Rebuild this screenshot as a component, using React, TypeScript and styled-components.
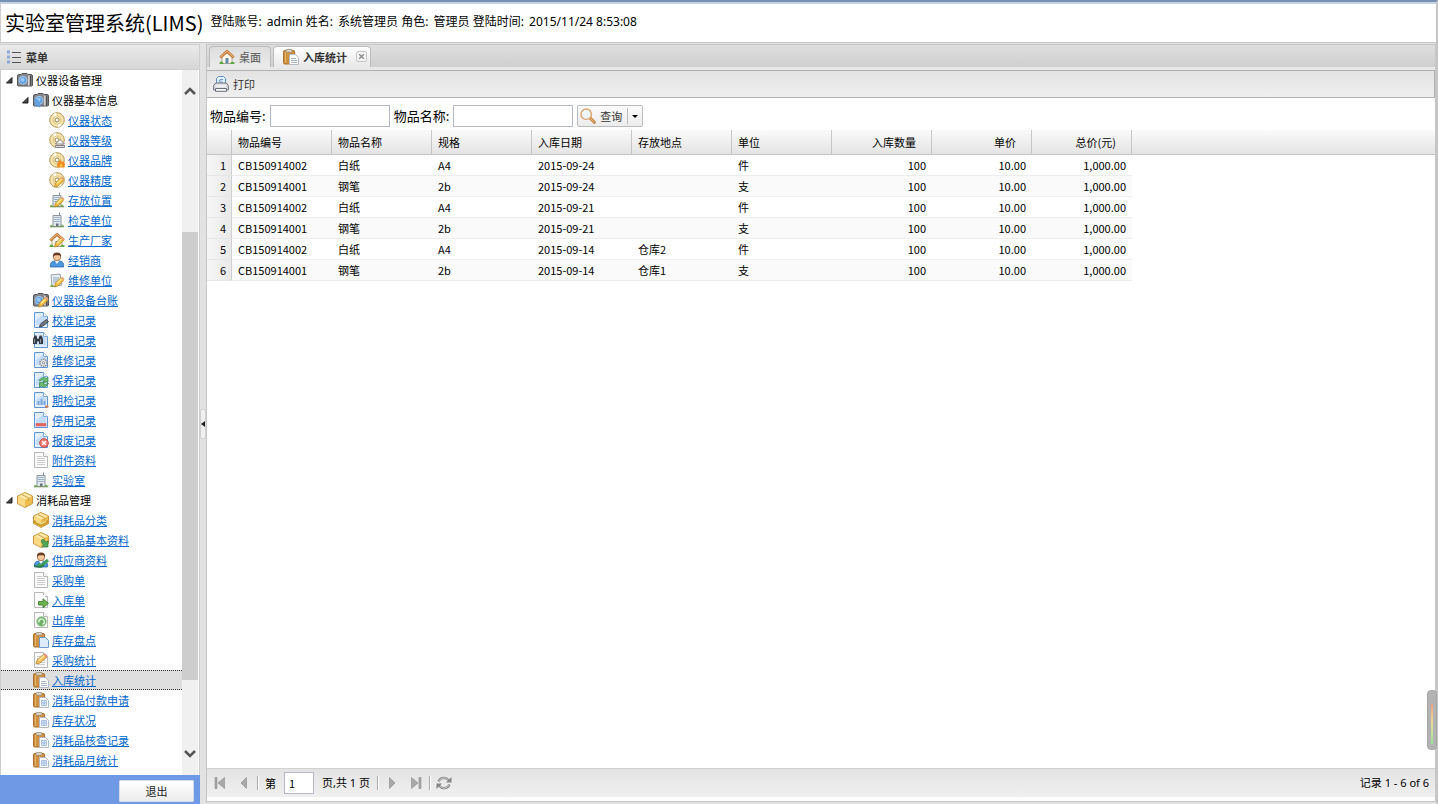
import React from "react";
import styled, { createGlobalStyle } from "styled-components";

const GlobalStyle = createGlobalStyle`
  * { box-sizing: border-box; }
  body { margin: 0; background: #fff; }
  body, button, input {
    font-family: "Noto Sans CJK SC", "Liberation Sans", sans-serif;
    font-size: 11px;
    line-height: 16px;
    color: #000;
  }
  button { padding: 0; border: 0; background: none; }
`;

/* ---------- icons ---------- */

type IconName =
  | "camera" | "cameraFolder" | "cameraEdit" | "disc" | "building" | "house"
  | "user" | "userEdit" | "note" | "record" | "page" | "box" | "boxOpen"
  | "clipboard" | "clipboardBlue" | "pageEdit";
type Overlay =
  | "eject" | "flame" | "pencil" | "pen" | "binoculars" | "gear" | "sync"
  | "chart" | "minus" | "cross" | "arrow" | "refresh" | "sheet" | "grid" | "boxArrow";

const Pencil = () => (
  <g>
    <path d="M5.500 15l1-4 5-5 3 2.800-5.200 5z" fill="#f3bd3c" stroke="#b5802a" strokeWidth=".7" />
    <path d="M7.500 11l4.500-4.500 1 1-4.500 4.500z" fill="#ffe79a" />
    <path d="M11.800 5.800l1.300-1.300 2.600 2.500-1.300 1.600z" fill="#eda572" />
  </g>
);
const Building = () => (
  <g>
    <path d="M4 14.500V3.500h8v11z" fill="#e3e8ed" stroke="#8b959f" />
    <path d="M5.500 5.500h5M5.500 7.500h5M5.500 9.500h5" stroke="#6f93b6" strokeDasharray="1.200 .7" />
    <path d="M10.500 3.500V.5" stroke="#8b959f" />
    <path d="M7 11.500h2.500v3H7z" fill="#68727d" />
    <path d="M1 15c0-3 2.500-3 3.500 0zM11.500 15c.3-3.500 3-3.500 3.500 0z" fill="#7ab55e" />
    <path d="M1 14.800h14" stroke="#759660" />
  </g>
);
const Page = ({ blue = false }: { blue?: boolean }) => (
  <g>
    <path d="M1.500.5h9l4 4v11h-13z" fill={blue ? "#e2eefd" : "#fbfbfb"} stroke={blue ? "#5f95d6" : "#b9b9b9"} />
    {!blue && <path d="M4 4.500h5M4 6.500h8M4 8.500h8M4 10.500h8M4 12.500h8" stroke="#cdcdcd" />}
    {blue && <path d="M3 13V8l7-5.500 3 3V13z" fill="#c2dbfa" />}
    <path d="M10.500.5v4h4" fill="#fff" stroke={blue ? "#7fabe0" : "#b9b9b9"} />
  </g>
);
const Camera = () => (
  <g>
    <path d="M.5 4q0-1.500 1.500-1.500h2l1-1h5l1 1h3q1.500 0 1.500 1.500v9q0 1-1 1h-13q-1 0-1-1z" fill="#85868a" stroke="#55565a" />
    <path d="M11 3.500h2v10h-2z" fill="#d0cfcb" />
    <path d="M13.500 3.500v10" stroke="#4c4d51" strokeWidth="1.400" />
    <circle cx="6" cy="8.300" r="4" fill="#5f9fe0" stroke="#b6d0ec" strokeWidth=".8" />
    <circle cx="5.600" cy="7.800" r="2" fill="#9ccaf6" />
  </g>
);
const Person = () => (
  <g>
    <path d="M1.500 15q-1-5.500 4-6h5q5 .5 4 6z" fill="#4c96df" stroke="#2c69ac" strokeWidth=".8" />
    <path d="M6 9l2 3 2-3z" fill="#fff" />
    <circle cx="8" cy="5" r="3.700" fill="#f3c69c" stroke="#9a5c33" strokeWidth=".7" />
    <path d="M4 5Q3.500.6 8 .6T12 5L10.500 3.200 6 3.300z" fill="#6b3d23" />
  </g>
);
const Box = () => (
  <g>
    <path d="M8 .5l7.500 3.500v7.500L8 15.500.5 11.500V4z" fill="#efbd4b" stroke="#c08d30" strokeWidth=".9" />
    <path d="M1 4.300L8 7.700l7-3.400L8 1z" fill="#ffe9a8" />
    <path d="M1 4.800L8 8v7l-7-3.800z" fill="#fbda85" />
    <path d="M5 2.700l6.500 3.200v3" stroke="#cfa04a" fill="none" />
  </g>
);
const Clipboard = ({ blue = false }: { blue?: boolean }) => (
  <g>
    <rect x=".6" y="1.500" width="11" height="13.500" rx="1.200" fill="#cf9140" stroke="#a56b28" />
    <path d="M2.500 3v11" stroke="#e6b56c" />
    <rect x="3" y=".5" width="6" height="2.800" rx="1" fill="#dcd7cc" stroke="#9a8c74" strokeWidth=".8" />
    <path d="M6.500 5.500h6l3 3v7h-9z" fill={blue ? "#dcebfd" : "#fff"} stroke={blue ? "#6b9bd6" : "#b3bac4"} />
  </g>
);
const House = () => (
  <g>
    <path d="M3 8v6.500h10V8L8 3.500z" fill="#fbf6e8" stroke="#a4967c" strokeWidth=".8" />
    <path d="M1.300 8.500L8 2.200l6.700 6.300" fill="none" stroke="#a8672f" strokeWidth="2.600" strokeLinejoin="round" />
    <path d="M1.400 8.200L8 2l6.600 6.200" fill="none" stroke="#f0b069" strokeWidth="1.200" />
    <path d="M6.500 9h3v5.500h-3z" fill="#6388ad" />
    <path d="M.3 15q.5-3.500 3.500-2l1 2zM11 15q1-3.500 4.500-1.500V15z" fill="#5fa742" />
  </g>
);

const bases: Record<IconName, React.ReactNode> = {
  camera: <Camera />,
  cameraFolder: <g><Camera /><path d="M1 6.500l4 1 3 6-1 2-5-1.500z" fill="#5e9fe2" opacity=".85" /></g>,
  cameraEdit: <g><Camera /><Pencil /></g>,
  disc: (
    <g>
      <circle cx="8" cy="8" r="7.300" fill="#f3e2ad" stroke="#b59959" />
      <path d="M8 8L3.500 2.500A7 7 0 0 1 7 1zM8 8l4.500 5.500A7 7 0 0 1 9 15z" fill="#fffdf0" />
      <circle cx="8" cy="8" r="4" fill="none" stroke="#e0ca8c" />
      <circle cx="8" cy="8" r="2" fill="#fff" stroke="#9f854b" />
    </g>
  ),
  building: <Building />,
  house: <House />,
  user: <Person />,
  userEdit: <g><Person /><path d="M5 12l3 2 7-6" stroke="#3fa05a" strokeWidth="3" fill="none" /><path d="M1 13q5 4 10 0" stroke="#2f7646" strokeWidth="1.500" fill="none" /></g>,
  note: <g><path d="M2 3l9-1 2 11-10 1.500z" fill="#e8eef3" stroke="#95a4af" /><path d="M4 6h6M4 8h6M4 10h5" stroke="#8ba5bb" /><path d="M1 15q1-4 4-1l4 1z" fill="#72a84e" /></g>,
  record: <Page blue />,
  page: <Page />,
  box: <Box />,
  boxOpen: <g><Box /><path d="M1 8l7 3.500L15 8v3l-7 3.700L1 11z" fill="#c99b28" /><path d="M3 9.500l5 2.500 5-2.500" stroke="#fff0a9" fill="none" /></g>,
  clipboard: <Clipboard />,
  clipboardBlue: <Clipboard blue />,
  pageEdit: <g><Page /><path d="M3 12l1-4 7-6 3 3-7 6z" fill="#f5bf54" stroke="#b78335" strokeWidth=".8" /><path d="M5 8l6-5.500 1 1L6 9z" fill="#ffe6a0" /><path d="M10.500 2.500l1.500-1 3 2.500-1.500 1.500z" fill="#e88c7b" /></g>,
};

const overlays: Record<Overlay, React.ReactNode> = {
  eject: <g><path d="M6.500 12L11 7.500l4.500 4.500z" fill="#f7f7f7" stroke="#86868c" /><path d="M6.500 13.500h9v2h-9z" fill="#ddd" stroke="#86868c" /></g>,
  flame: <g><path d="M9 15.500q-2.500-3 1-6l1-2 1.500 2q4.500-.5 3 6z" fill="#f18a22" /><path d="M10.500 14.500q0-2 2-3 1 1.500 1 3z" fill="#ffd13e" /></g>,
  pencil: <Pencil />,
  pen: <path d="M6.500 15l1-3 6-4.500 2 2.300-6.500 4.700z" fill="#737980" stroke="#3f444b" />,
  binoculars: (
    <g>
      <path d="M0 12V7l1.500-3.500h2L4.500 7h1L6.500 3.500h2L10 7v5H6V9.500H4V12z" fill="#343a42" />
      <path d="M1.500 7v4M7.500 7v4" stroke="#8f9aa6" />
    </g>
  ),
  gear: <g><circle cx="10.500" cy="10.800" r="3.600" fill="#e3e5e9" stroke="#888f9a" strokeWidth="1.500" strokeDasharray="1.500 .8" /><circle cx="10.500" cy="10.800" r="1.200" fill="#fff" stroke="#888f9a" /></g>,
  sync: <g fill="#70bd71" stroke="#2d8541" strokeWidth=".7"><path d="M6 8.500q3.500-5 7.500-2l1.500-1.500v5h-5l1.500-1.500q-2.500-1.500-4.500.5z" /><path d="M15.500 11.500q-3 5-7.500 2.500L6.500 15.500v-5h5L10 12q2.500 1.500 4.500-.5z" /></g>,
  chart: <g><path d="M5.500 13V9M8.500 13V7M11.500 13V9" stroke="#7ba7d6" strokeWidth="2" /><path d="M12 14.500h3.500" stroke="#d77f53" strokeWidth="2" /></g>,
  minus: <path d="M3 11.500h10v2.500H3z" fill="#e9655f" stroke="#d35a58" strokeWidth=".6" />,
  cross: <g><circle cx="11" cy="11" r="4.300" fill="#ee8177" stroke="#c9463e" /><path d="M9.200 9.200l3.600 3.600m0-3.600l-3.600 3.600" stroke="#fff" strokeWidth="1.400" /></g>,
  arrow: <g><path d="M3 3h9v10H3z" fill="#fbfbfb" /><path d="M5.500 9.500h4.500V6.800l5.500 4.500-5.500 4.500V13H5.500z" fill="#6fb24b" stroke="#34792a" strokeWidth=".8" /></g>,
  refresh: <g><path d="M3 3h7v10H3z" fill="#fbfbfb" /><circle cx="8.500" cy="9.500" r="4.800" fill="#69b064" stroke="#a3cda0" /><path d="M6 10.500a2.700 2.700 0 1 1 3.500 1.800" stroke="#f1fff1" strokeWidth="1.200" fill="none" /></g>,
  sheet: <path d="M8 9.500h5M8 11.500h6M8 13.500h6" stroke="#a3b0bf" />,
  grid: <path d="M8.500 8.500h5v5h-5zM8.500 11h5M11 8.500v5" fill="#dce8f8" stroke="#9bb7dc" strokeWidth=".8" />,
  boxArrow: <path d="M8 9l2-2 3 3 2-1v6H9l1.500-2z" fill="#53a65a" stroke="#2f7c39" strokeWidth=".7" />,
};

const IconSvg = styled.svg`
  width: 16px;
  height: 16px;
  flex: none;
`;
const Icon = ({ name, over }: { name: IconName; over?: Overlay }) => (
  <IconSvg viewBox="0 0 16 16" aria-hidden="true">
    {bases[name]}
    {over && overlays[over]}
  </IconSvg>
);

/* ---------- page frame ---------- */

const Shell = styled.div`
  display: flex;
  flex-direction: column;
  height: 100vh;
  min-height: 400px;
  border-top: 2px solid #7591b0;
  border-right: 2px solid #c6c6c6;
  overflow: hidden;
`;
const Header = styled.header`
  display: flex;
  align-items: center;
  gap: 7px;
  height: 41px;
  flex: none;
  padding-left: 4px;
  border-top: 2px solid #c3d3e4;
  border-bottom: 1px solid #c6c6c6;
  border-left: 1px solid #ccc;
  white-space: nowrap;
`;
const Title = styled.h1`
  margin: 0;
  font-size: 20px;
  line-height: 36px;
  font-weight: 400;
`;
const Account = styled.div`
  padding-bottom: 2px;
  font-family: "Noto Sans", "Noto Sans CJK SC", sans-serif;
  font-size: 12px;
  line-height: 18px;
`;
const AccountValue = styled.span`
  margin-left: 2px;
`;
const Body = styled.div`
  display: flex;
  flex: 1;
  min-height: 0;
  background: #e2e2e2;
  padding-top: 1px;
`;

/* ---------- sidebar ---------- */

const Sidebar = styled.aside`
  display: flex;
  flex-direction: column;
  width: 200px;
  flex: none;
`;
const MenuTitle = styled.h2`
  display: flex;
  align-items: center;
  gap: 5px;
  height: 26px;
  flex: none;
  margin: 0;
  padding-left: 7px;
  border: 1px solid #d0d0d0;
  border-width: 1px 1px 1px 0;
  background: linear-gradient(#eaeaea, #d6d6d6);
  color: #333;
  font-size: 11px;
  font-weight: 700;
`;
const TreePane = styled.div`
  display: flex;
  flex: 1;
  min-height: 0;
  border: 1px solid #ccc;
  border-width: 0 1px;
  background: #fff;
`;
const Tree = styled.ul`
  flex: 1;
  min-width: 0;
  margin: 0;
  padding: 0;
  overflow: hidden;
  list-style: none;
`;
const TreeRow = styled.li<{ $level: number; $active?: boolean }>`
  display: flex;
  align-items: center;
  height: 20px;
  padding-left: ${(p) => p.$level * 16}px;
  border: 0 dotted #333;
  white-space: nowrap;
  ${(p) => p.$active && "border-width: 1px 0; background: #dfdfdf;"}
`;
const Expander = styled.span`
  display: flex;
  justify-content: center;
  width: 16px;
  flex: none;
`;
const treeText = `
  margin-left: 3px;
  padding-bottom: 1px;
  font-size: 11px;
  line-height: 16px;
`;
const TreeLabel = styled.span`${treeText}`;
const TreeLink = styled.a`
  ${treeText}
  color: #0066cc;
  text-decoration: underline;
`;
const Scrollbar = styled.div`
  display: flex;
  flex-direction: column;
  width: 16px;
  flex: none;
  margin-right: 1px;
  background: #f0f0f0;
`;
const ScrollButton = styled.button`
  display: flex;
  align-items: center;
  justify-content: center;
  height: 42px;
  flex: none;
`;
const ScrollSpace = styled.div<{ $grow: number }>`flex: ${(p) => p.$grow};`;
const ScrollThumb = styled.div`
  flex: 448;
  background: #cdcdcd;
`;
const LogoutBar = styled.div`
  display: flex;
  align-items: center;
  justify-content: flex-end;
  height: 29px;
  flex: none;
  padding: 2px 6px 0 0;
  background: #6f99e4;
`;
const LogoutButton = styled.button`
  width: 75px;
  height: 22px;
  border: 1px solid #d5dbe6;
  border-radius: 1px;
  background: linear-gradient(#fff, #ececec);
  color: #222;
`;
const Splitter = styled.div`
  display: flex;
  align-items: center;
  width: 6px;
  flex: none;
`;
const Collapse = styled.button`
  display: flex;
  align-items: center;
  justify-content: center;
  width: 6px;
  height: 30px;
  border: 1px solid #d0d0d0;
  border-radius: 2px;
  background: #f1f1f1;
`;

/* ---------- main panel ---------- */

const Main = styled.main`
  display: flex;
  flex-direction: column;
  flex: 1;
  min-width: 0;
  margin-bottom: 2px;
  border: 1px solid #c6c6c6;
  background: #fff;
`;
const Tabs = styled.div`
  display: flex;
  align-items: flex-end;
  gap: 2px;
  height: 25px;
  flex: none;
  padding: 0 2px;
  border-bottom: 3px solid #e8e8e8;
  background: linear-gradient(#dedede, #cfcfcf);
`;
const Tab = styled.div<{ $active?: boolean }>`
  display: flex;
  align-items: center;
  height: 21px;
  padding: 0 ${(p) => (p.$active ? 3 : 9)}px 0 9px;
  border: 1px solid #bcbcbc;
  border-bottom: 0;
  border-radius: 4px 4px 0 0;
  background: ${(p) => (p.$active ? "linear-gradient(#fff, #e8e8e8)" : "linear-gradient(#dedede, #eaeaea)")};
`;
const TabButton = styled.button<{ $active?: boolean }>`
  display: flex;
  align-items: center;
  gap: 4px;
  color: ${(p) => (p.$active ? "#333" : "#666")};
  font-weight: ${(p) => (p.$active ? 700 : 500)};
`;
const CloseTab = styled.button`
  display: flex;
  align-items: center;
  justify-content: center;
  width: 11px;
  height: 11px;
  margin: 0 0 2px 9px;
  border: 1px solid #c5c5c5;
  border-radius: 2px;
  background: #f4f4f4;
`;
const Toolbar = styled.div`
  display: flex;
  align-items: center;
  height: 28px;
  flex: none;
  padding-left: 6px;
  border: 1px solid #b0b0b0;
  border-left: 0;
  background: linear-gradient(#e3e3e3, #efefef);
`;
const ToolButton = styled.button`
  display: flex;
  align-items: center;
  gap: 4px;
  color: #333;
`;
const SearchForm = styled.form`
  display: flex;
  align-items: center;
  gap: 4px;
  height: 32px;
  flex: none;
  padding: 4px 0 0 3px;
`;
const FieldLabel = styled.label`
  display: flex;
  align-items: center;
  gap: 4px;
  font-size: 13px;
  line-height: 20px;
  white-space: nowrap;
`;
const FieldInput = styled.input`
  width: 120px;
  height: 22px;
  padding: 1px 4px;
  border: 1px solid #b5b8c8;
  background: #fff;
`;
const SplitButton = styled.div`
  display: flex;
  height: 22px;
  border: 1px solid #bbb;
  border-radius: 2px;
  background: linear-gradient(#fbfbfb, #ececec);
`;
const QueryButton = styled.button`
  display: flex;
  align-items: center;
  gap: 4px;
  padding: 0 5px 0 2px;
  color: #333;
`;
const DropButton = styled.button`
  display: flex;
  align-items: center;
  justify-content: center;
  width: 15px;
  margin: 2px 0;
  border-left: 1px solid #bbb;
`;
const GridPane = styled.div`
  flex: 1;
  min-height: 0;
  overflow: hidden;
`;
const Grid = styled.table`
  width: 100%;
  border-collapse: separate;
  border-spacing: 0;
  table-layout: fixed;
`;
const Col = styled.col<{ $width?: number }>`
  width: ${(p) => (p.$width ? `${p.$width}px` : "auto")};
`;
const HeadCell = styled.th<{ $right?: boolean; $filler?: boolean }>`
  height: 25px;
  padding: 0 ${(p) => (p.$right ? 15 : 6)}px 1px;
  border-bottom: 1px solid #c5c5c5;
  border-right: ${(p) => (p.$filler ? "0" : "1px solid #c5c5c5")};
  background: linear-gradient(#fafafa, #e4e4e4);
  font-weight: 400;
  text-align: ${(p) => (p.$right ? "right" : "left")};
`;
const Cell = styled.td<{ $right?: boolean; $alt?: boolean }>`
  height: 21px;
  padding: 0 6px;
  border-bottom: 1px solid #ededed;
  background: ${(p) => (p.$alt ? "#fafafa" : "#fff")};
  text-align: ${(p) => (p.$right ? "right" : "left")};
`;
const NumberCell = styled.td`
  padding: 0 5px 0 0;
  border-right: 1px solid #d0d0d0;
  border-bottom: 1px solid #e6e6e6;
  background: linear-gradient(90deg, #f6f6f6, #e9e9e9);
  text-align: right;
`;
const Pager = styled.div`
  display: flex;
  align-items: center;
  height: 29px;
  flex: none;
  margin-bottom: 4px;
  padding: 0 6px 0 1px;
  border-top: 1px solid #d0d0d0;
  background: linear-gradient(#e3e3e3, #f0f0f0);
  white-space: nowrap;
`;
const PagerButton = styled.button`
  display: flex;
  align-items: center;
  justify-content: center;
  width: 16px;
  height: 22px;
  margin: 0 4px;
`;
const Separator = styled.span`
  width: 2px;
  height: 14px;
  margin: 0 1px;
  border-left: 1px solid #aaa;
  border-right: 1px solid #fff;
`;
const PageLabel = styled.label`
  display: flex;
  align-items: center;
  gap: 8px;
  margin-left: 5px;
`;
const PageInput = styled.input`
  width: 30px;
  height: 22px;
  padding: 0 4px;
  border: 1px solid #b5b8c8;
  background: #fff;
`;
const pagerText = `font-family: "Noto Sans", "Noto Sans CJK SC", sans-serif;`;
const PageTotal = styled.span`
  ${pagerText}
  margin: 0 6px 0 8px;
`;
const Records = styled.span`
  ${pagerText}
  margin-left: auto;
`;
const Gauge = styled.div`
  position: fixed;
  right: 1px;
  bottom: 54px;
  display: flex;
  justify-content: center;
  width: 10px;
  height: 60px;
  padding: 13px 0 5px;
  border: 1px solid #a5a5a5;
  border-radius: 4px;
  background: #b3b3b3;
`;
const GaugeBar = styled.div`
  width: 2px;
  background: linear-gradient(#f0a080, #eadb9c 45%, #9be49b);
`;

/* ---------- data ---------- */

const account = [
  ["登陆账号", "admin"],
  ["姓名", "系统管理员"],
  ["角色", "管理员"],
  ["登陆时间", "2015/11/24 8:53:08"],
];

type Node = { text: string; level: number; icon: IconName; over?: Overlay; open?: boolean; active?: boolean };
const nodes: Node[] = [
  { text: "仪器设备管理", level: 0, icon: "camera", open: true },
  { text: "仪器基本信息", level: 1, icon: "cameraFolder", open: true },
  { text: "仪器状态", level: 2, icon: "disc" },
  { text: "仪器等级", level: 2, icon: "disc", over: "eject" },
  { text: "仪器品牌", level: 2, icon: "disc", over: "flame" },
  { text: "仪器精度", level: 2, icon: "disc", over: "pencil" },
  { text: "存放位置", level: 2, icon: "building", over: "pencil" },
  { text: "检定单位", level: 2, icon: "building" },
  { text: "生产厂家", level: 2, icon: "house", over: "pencil" },
  { text: "经销商", level: 2, icon: "user" },
  { text: "维修单位", level: 2, icon: "note", over: "pencil" },
  { text: "仪器设备台账", level: 1, icon: "cameraEdit" },
  { text: "校准记录", level: 1, icon: "record", over: "pen" },
  { text: "领用记录", level: 1, icon: "record", over: "binoculars" },
  { text: "维修记录", level: 1, icon: "record", over: "gear" },
  { text: "保养记录", level: 1, icon: "record", over: "sync" },
  { text: "期检记录", level: 1, icon: "record", over: "chart" },
  { text: "停用记录", level: 1, icon: "record", over: "minus" },
  { text: "报废记录", level: 1, icon: "record", over: "cross" },
  { text: "附件资料", level: 1, icon: "page" },
  { text: "实验室", level: 1, icon: "building" },
  { text: "消耗品管理", level: 0, icon: "box", open: true },
  { text: "消耗品分类", level: 1, icon: "boxOpen" },
  { text: "消耗品基本资料", level: 1, icon: "box", over: "boxArrow" },
  { text: "供应商资料", level: 1, icon: "userEdit" },
  { text: "采购单", level: 1, icon: "page" },
  { text: "入库单", level: 1, icon: "page", over: "arrow" },
  { text: "出库单", level: 1, icon: "page", over: "refresh" },
  { text: "库存盘点", level: 1, icon: "clipboardBlue" },
  { text: "采购统计", level: 1, icon: "pageEdit" },
  { text: "入库统计", level: 1, icon: "clipboard", over: "sheet", active: true },
  { text: "消耗品付款申请", level: 1, icon: "clipboard", over: "grid" },
  { text: "库存状况", level: 1, icon: "clipboard", over: "grid" },
  { text: "消耗品核查记录", level: 1, icon: "clipboard", over: "grid" },
  { text: "消耗品月统计", level: 1, icon: "clipboard", over: "grid" },
];

const columns = [
  { title: "物品编号" }, { title: "物品名称" }, { title: "规格" }, { title: "入库日期" },
  { title: "存放地点" }, { title: "单位" }, { title: "入库数量", right: true },
  { title: "单价", right: true }, { title: "总价(元)", right: true },
];
const rows = [
  ["CB150914002", "白纸", "A4", "2015-09-24", "", "件", "100", "10.00", "1,000.00"],
  ["CB150914001", "钢笔", "2b", "2015-09-24", "", "支", "100", "10.00", "1,000.00"],
  ["CB150914002", "白纸", "A4", "2015-09-21", "", "件", "100", "10.00", "1,000.00"],
  ["CB150914001", "钢笔", "2b", "2015-09-21", "", "支", "100", "10.00", "1,000.00"],
  ["CB150914002", "白纸", "A4", "2015-09-14", "仓库2", "件", "100", "10.00", "1,000.00"],
  ["CB150914001", "钢笔", "2b", "2015-09-14", "仓库1", "支", "100", "10.00", "1,000.00"],
];

const Chevron = ({ down = false }: { down?: boolean }) => (
  <svg width="12" height="8" viewBox="0 0 12 8" aria-hidden="true">
    <path d={down ? "M1 1l5 5 5-5" : "M1 7l5-5 5 5"} fill="none" stroke="#555" strokeWidth="2.500" />
  </svg>
);
const PagerIcon = ({ d }: { d: string }) => (
  <svg width="12" height="12" viewBox="0 0 12 12" aria-hidden="true">
    <path d={d} fill="#a8a8a8" stroke="#8c8c8c" strokeWidth=".6" />
  </svg>
);

export default function App() {
  return (
    <Shell>
      <GlobalStyle />
      <Header>
        <Title>实验室管理系统(LIMS)</Title>
        <Account>
          {account.map(([label, value]) => (
            <React.Fragment key={label}>
              {label}: <AccountValue>{value}</AccountValue>{" "}
            </React.Fragment>
          ))}
        </Account>
      </Header>
      <Body>
        <Sidebar>
          <MenuTitle>
            <svg width="14" height="14" viewBox="0 0 14 14" aria-hidden="true">
              <path d="M0 2h3M0 7h3M0 12h3" stroke="#8aa9d6" strokeWidth="3" />
              <path d="M5 2.500h9M5 7.500h9M5 12.500h9" stroke="#555" />
            </svg>
            菜单
          </MenuTitle>
          <TreePane>
            <Tree>
              {nodes.map((n) => (
                <TreeRow key={n.text} $level={n.level} $active={n.active}>
                  <Expander>
                    {n.open && (
                      <svg width="8" height="8" viewBox="0 0 8 8" aria-hidden="true">
                        <path d="M7 1.500V7H1.500z" fill="#444" stroke="#222" />
                      </svg>
                    )}
                  </Expander>
                  <Icon name={n.icon} over={n.over} />
                  {n.open ? <TreeLabel>{n.text}</TreeLabel> : <TreeLink href="#">{n.text}</TreeLink>}
                </TreeRow>
              ))}
            </Tree>
            <Scrollbar>
              <ScrollButton aria-label="向上滚动"><Chevron /></ScrollButton>
              <ScrollSpace $grow={120} />
              <ScrollThumb />
              <ScrollSpace $grow={53} />
              <ScrollButton aria-label="向下滚动"><Chevron down /></ScrollButton>
            </Scrollbar>
          </TreePane>
          <LogoutBar>
            <LogoutButton>退出</LogoutButton>
          </LogoutBar>
        </Sidebar>
        <Splitter>
          <Collapse aria-label="折叠菜单">
            <svg width="4" height="6" viewBox="0 0 4 6" aria-hidden="true"><path d="M4 0v6L0 3z" fill="#222" /></svg>
          </Collapse>
        </Splitter>
        <Main>
          <Tabs>
            <Tab>
              <TabButton><Icon name="house" />桌面</TabButton>
            </Tab>
            <Tab $active>
              <TabButton $active><Icon name="clipboard" over="sheet" />入库统计</TabButton>
              <CloseTab aria-label="关闭">
                <svg width="5" height="5" viewBox="0 0 5 5" aria-hidden="true"><path d="M0 0l5 5M5 0L0 5" stroke="#888" strokeWidth="1.300" /></svg>
              </CloseTab>
            </Tab>
          </Tabs>
          <Toolbar>
            <ToolButton>
              <IconSvg viewBox="0 0 16 16" aria-hidden="true">
                <path d="M3.500 8V2.500l2-2h5l2 2V8z" fill="#e4effc" stroke="#5d8cc4" />
                <path d="M6 5.500q0-2.500 4-2M6.500 6h3" stroke="#5d8cc4" fill="none" />
                <path d="M.7 9.500l2-2.500h10.600l2 2.500v4.500H.7z" fill="#dfe2e5" stroke="#6c7178" />
                <path d="M3.500 9.500h9v1h-9z" fill="#fff" />
                <path d="M2.500 12.500h11v2.800h-11z" fill="#f8f8f8" stroke="#6c7178" />
              </IconSvg>
              打印
            </ToolButton>
          </Toolbar>
          <SearchForm onSubmit={(e) => e.preventDefault()}>
            <FieldLabel>物品编号:<FieldInput type="text" /></FieldLabel>
            <FieldLabel>物品名称:<FieldInput type="text" /></FieldLabel>
            <SplitButton>
              <QueryButton type="submit">
                <IconSvg viewBox="0 0 16 16" aria-hidden="true">
                  <path d="M9.800 9.800l4.500 4.500" stroke="#b87535" strokeWidth="3" strokeLinecap="round" />
                  <path d="M10 10l4 4" stroke="#efb36f" strokeWidth="1.300" strokeLinecap="round" />
                  <circle cx="6.200" cy="6.200" r="5.200" fill="#edf5fc" stroke="#dda466" strokeWidth="1.400" />
                  <path d="M3 6a3 3 0 0 1 3-3" stroke="#fff" strokeWidth="1.500" fill="none" />
                </IconSvg>
                查询
              </QueryButton>
              <DropButton type="button" aria-label="更多">
                <svg width="6" height="3" viewBox="0 0 6 3" aria-hidden="true"><path d="M0 0h6L3 3z" fill="#000" /></svg>
              </DropButton>
            </SplitButton>
          </SearchForm>
          <GridPane>
            <Grid>
              <colgroup>
                <Col $width={25} />
                {columns.map((c) => <Col key={c.title} $width={100} />)}
                <Col />
              </colgroup>
              <thead>
                <tr>
                  <HeadCell />
                  {columns.map((c) => <HeadCell key={c.title} $right={c.right}>{c.title}</HeadCell>)}
                  <HeadCell $filler />
                </tr>
              </thead>
              <tbody>
                {rows.map((r, i) => (
                  <tr key={i}>
                    <NumberCell>{i + 1}</NumberCell>
                    {r.map((v, j) => <Cell key={j} $right={columns[j].right} $alt={i % 2 === 1}>{v}</Cell>)}
                    <td />
                  </tr>
                ))}
              </tbody>
            </Grid>
          </GridPane>
          <Pager>
            <PagerButton aria-label="首页"><PagerIcon d="M1 .5h2v11H1zM10.500.5v11L4 6z" /></PagerButton>
            <PagerButton aria-label="上一页"><PagerIcon d="M8.500.5v11L3 6z" /></PagerButton>
            <Separator />
            <PageLabel>第<PageInput type="text" defaultValue="1" /></PageLabel>
            <PageTotal>页,共 1 页</PageTotal>
            <Separator />
            <PagerButton aria-label="下一页"><PagerIcon d="M3.500.5v11L9 6z" /></PagerButton>
            <PagerButton aria-label="末页"><PagerIcon d="M9 .5h2v11H9zM1.500.5v11L8 6z" /></PagerButton>
            <Separator />
            <PagerButton aria-label="刷新">
              <svg width="16" height="16" viewBox="0 0 16 16" aria-hidden="true">
                <g fill="none" stroke="#858585" strokeWidth="2.200">
                  <path d="M2.500 6.500Q4 2.800 8 2.800q2.800 0 4.500 2.400" />
                  <path d="M13.500 9.500Q12 13.200 8 13.200q-2.800 0-4.500-2.400" />
                </g>
                <path d="M15.500 2v5.500H10zM.5 14V8.500H6z" fill="#858585" />
                <g fill="none" stroke="#d8d8d8" strokeWidth=".8">
                  <path d="M3 6Q4.500 2.800 8 2.800q2.500 0 4 2" />
                  <path d="M13 10Q11.500 13.200 8 13.200q-2.500 0-4-2" />
                </g>
              </svg>
            </PagerButton>
            <Records>记录 1 - 6 of 6</Records>
          </Pager>
        </Main>
      </Body>
      <Gauge aria-hidden="true"><GaugeBar /></Gauge>
    </Shell>
  );
}
